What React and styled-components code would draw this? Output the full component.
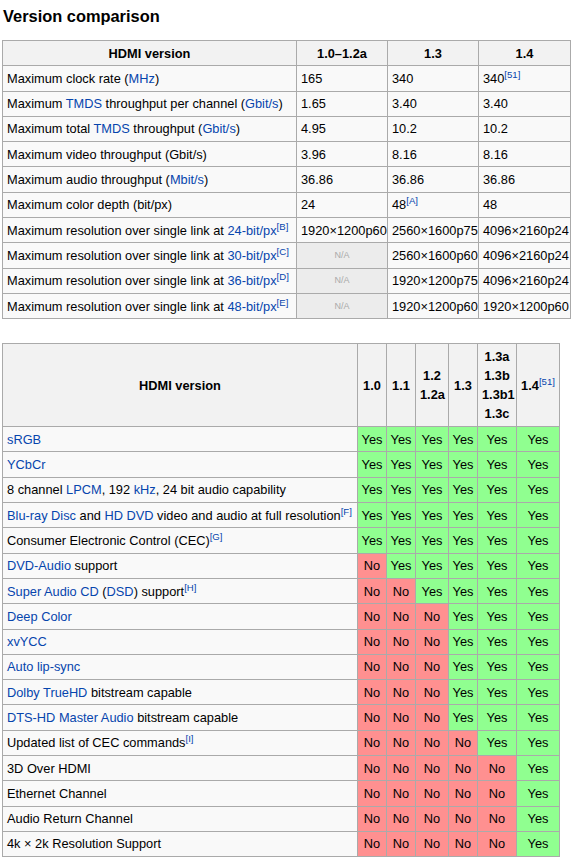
import React from 'react';
import styled, { createGlobalStyle } from 'styled-components';

const GlobalStyle = createGlobalStyle`
  body {
    margin: 0;
    background: #ffffff;
    font-family: "Liberation Sans", Arial, sans-serif;
    color: #000;
  }
`;

const Page = styled.div`
  padding: 0 2px;
`;

const Title = styled.h3`
  margin: 0;
  padding: 6px 1px 0;
  height: 40px;
  box-sizing: border-box;
  font-size: 16.4px;
  font-weight: bold;
  line-height: 20px;
`;

const Table = styled.table`
  border-collapse: collapse;
  table-layout: fixed;
  width: ${(p) => p.width}px;
  margin-bottom: ${(p) => p.gap || 0}px;
  border: 1px solid #aaa;
  background: #f9f9f9;
  font-size: 12.8px;
  line-height: 19.2px;
`;

const Col = styled.col`
  width: ${(p) => p.w}px;
`;

const Th = styled.th`
  border: 1px solid #aaa;
  background: #f2f2f2;
  padding: 2.56px 4px;
  font-weight: bold;
  text-align: center;
  vertical-align: middle;
`;

const Td = styled.td`
  border: 1px solid #aaa;
  padding: 2.56px 4px;
  text-align: left;
  vertical-align: middle;
  white-space: nowrap;
  overflow: hidden;
`;

const NaCell = styled.td`
  border: 1px solid #aaa;
  padding: 2.56px 4px;
  background: #ececec;
  color: #aaa;
  font-size: 9px;
  text-align: center;
  vertical-align: middle;
`;

const FlagCell = styled.td`
  border: 1px solid #aaa;
  padding: 2.56px 2px;
  text-align: center;
  vertical-align: middle;
  background: ${(p) => (p.yes ? '#90ff90' : '#ff9090')};
`;

const A = styled.span`
  color: #0645ad;
`;

const Ref = styled.sup`
  color: #0645ad;
  font-size: 0.75em;
  font-weight: normal;
  line-height: 1;
  vertical-align: 5px;
`;

const specRows = [
  [<>Maximum clock rate (<A>MHz</A>)</>, '165', '340', <>340<Ref>[51]</Ref></>],
  [<>Maximum <A>TMDS</A> throughput per channel (<A>Gbit/s</A>)</>, '1.65', '3.40', '3.40'],
  [<>Maximum total <A>TMDS</A> throughput (<A>Gbit/s</A>)</>, '4.95', '10.2', '10.2'],
  ['Maximum video throughput (Gbit/s)', '3.96', '8.16', '8.16'],
  [<>Maximum audio throughput (<A>Mbit/s</A>)</>, '36.86', '36.86', '36.86'],
  ['Maximum color depth (bit/px)', '24', <>48<Ref>[A]</Ref></>, '48'],
  [<>Maximum resolution over single link at <A>24-bit/px</A><Ref>[B]</Ref></>, '1920×1200p60', '2560×1600p75', '4096×2160p24'],
  [<>Maximum resolution over single link at <A>30-bit/px</A><Ref>[C]</Ref></>, null, '2560×1600p60', '4096×2160p24'],
  [<>Maximum resolution over single link at <A>36-bit/px</A><Ref>[D]</Ref></>, null, '1920×1200p75', '4096×2160p24'],
  [<>Maximum resolution over single link at <A>48-bit/px</A><Ref>[E]</Ref></>, null, '1920×1200p60', '1920×1200p60'],
];

const featureRows = [
  [<A>sRGB</A>, 0],
  [<A>YCbCr</A>, 0],
  [<>8 channel <A>LPCM</A>, 192 <A>kHz</A>, 24 bit audio capability</>, 0],
  [<><A>Blu-ray Disc</A> and <A>HD DVD</A> video and audio at full resolution<Ref>[F]</Ref></>, 0],
  [<>Consumer Electronic Control (CEC)<Ref>[G]</Ref></>, 0],
  [<><A>DVD-Audio</A> support</>, 1],
  [<><A>Super Audio CD</A> (<A>DSD</A>) support<Ref>[H]</Ref></>, 2],
  [<A>Deep Color</A>, 3],
  [<A>xvYCC</A>, 3],
  [<A>Auto lip-sync</A>, 3],
  [<><A>Dolby TrueHD</A> bitstream capable</>, 3],
  [<><A>DTS-HD Master Audio</A> bitstream capable</>, 3],
  [<>Updated list of CEC commands<Ref>[I]</Ref></>, 4],
  ['3D Over HDMI', 5],
  ['Ethernet Channel', 5],
  ['Audio Return Channel', 5],
  ['4k × 2k Resolution Support', 5],
];

const versions = [
  '1.0',
  '1.1',
  <>1.2<br />1.2a</>,
  '1.3',
  <>1.3a<br />1.3b<br />1.3b1<br />1.3c</>,
  <>1.4<Ref>[51]</Ref></>,
];

export default function App() {
  return (
    <Page>
      <GlobalStyle />
      <Title>Version comparison</Title>

      <Table width={569} gap={24}>
        <colgroup>
          <Col w={294} />
          <Col w={91} />
          <Col w={91} />
          <Col w={92} />
        </colgroup>
        <thead>
          <tr>
            <Th>HDMI version</Th>
            <Th>1.0–1.2a</Th>
            <Th>1.3</Th>
            <Th>1.4</Th>
          </tr>
        </thead>
        <tbody>
          {specRows.map((row, i) => (
            <tr key={i}>
              <Td>{row[0]}</Td>
              {row[1] === null ? <NaCell>N/A</NaCell> : <Td>{row[1]}</Td>}
              <Td>{row[2]}</Td>
              <Td>{row[3]}</Td>
            </tr>
          ))}
        </tbody>
      </Table>

      <Table width={557}>
        <colgroup>
          <Col w={355} />
          <Col w={29} />
          <Col w={29} />
          <Col w={33} />
          <Col w={29} />
          <Col w={39} />
          <Col w={43} />
        </colgroup>
        <thead>
          <tr>
            <Th>HDMI version</Th>
            {versions.map((v, i) => (
              <Th key={i}>{v}</Th>
            ))}
          </tr>
        </thead>
        <tbody>
          {featureRows.map(([label, firstYes], i) => (
            <tr key={i}>
              <Td>{label}</Td>
              {versions.map((_, j) => (
                <FlagCell key={j} yes={j >= firstYes}>
                  {j >= firstYes ? 'Yes' : 'No'}
                </FlagCell>
              ))}
            </tr>
          ))}
        </tbody>
      </Table>
    </Page>
  );
}
